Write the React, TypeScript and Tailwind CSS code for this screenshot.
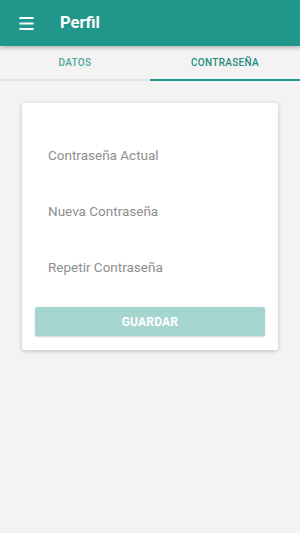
import { Menu } from 'lucide-react';

export default function App() {
  const fields = ['Contraseña Actual', 'Nueva Contraseña', 'Repetir Contraseña'];

  return (
    <div className="min-h-[533px] bg-[#f3f3f3] font-['Roboto',sans-serif]">
      {/* Toolbar */}
      <header className="h-[46px] bg-[#21968a] flex items-center px-[17px] shadow-[0_2px_4px_rgba(0,0,0,0.25)] relative z-10">
        <Menu className="w-[19px] h-[19px] text-white" strokeWidth={2.5} />
        <h1 className="ml-[24px] text-white text-[16.5px] font-bold">Perfil</h1>
      </header>

      {/* Tabs */}
      <nav className="flex h-[35px] border-b-[2px] border-[#e2e2e2]">
        <div className="flex-1 flex items-center justify-center text-[10px] font-medium tracking-[0.3px] text-[#4fa89e]">
          DATOS
        </div>
        <div className="flex-1 flex items-center justify-center text-[10px] font-medium tracking-[0.3px] text-[#1f8c80] border-b-[2px] border-[#21968a] -mb-[2px]">
          CONTRASEÑA
        </div>
      </nav>

      {/* Card */}
      <div className="px-[22px] pt-[22px]">
        <div className="bg-white rounded-[2px] shadow-[0_1px_4px_rgba(0,0,0,0.22)] px-[13px] pt-[24px] pb-[14px]">
          <div className="px-[13px]">
            {fields.map(f => (
              <div key={f} className="h-[56px] flex items-center text-[13.5px] text-[#8e8e8e]">
                {f}
              </div>
            ))}
          </div>
          <button className="mt-[12px] w-full h-[29px] bg-[#a5d5cf] rounded-[2px] text-white text-[12px] font-bold tracking-[0.2px] shadow-[0_1px_2px_rgba(0,0,0,0.18)]">
            GUARDAR
          </button>
        </div>
      </div>
    </div>
  );
}
